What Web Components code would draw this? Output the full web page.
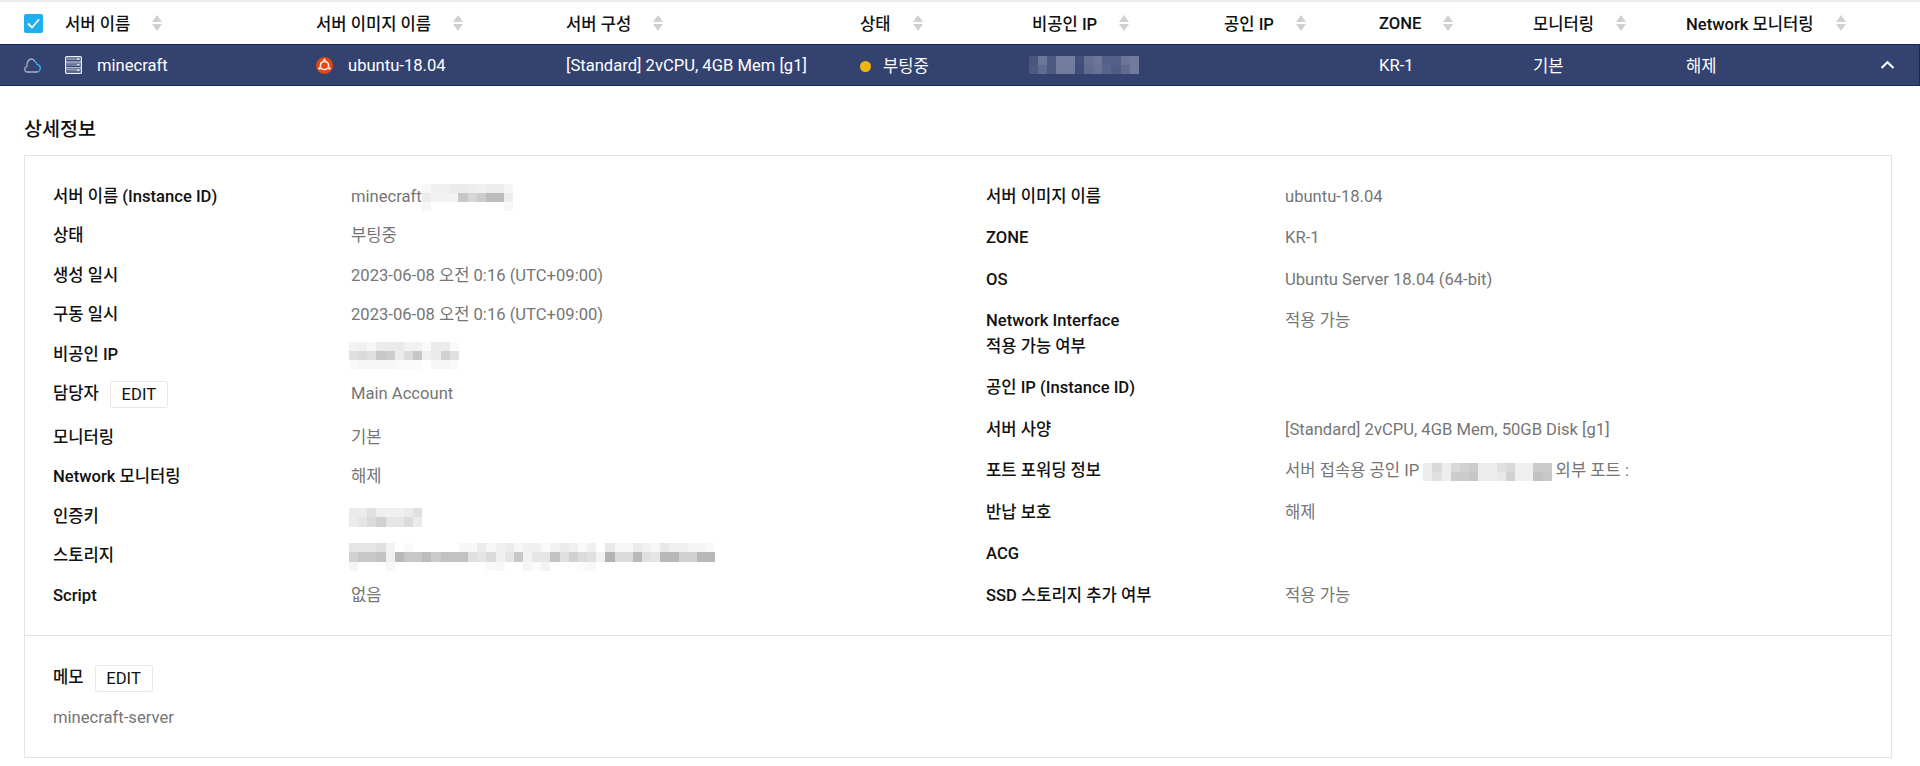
<!DOCTYPE html>
<html lang="ko">
<head>
<meta charset="utf-8">
<title>Server detail</title>
<style>
  html, body { margin: 0; padding: 0; background: #fff; }
  body { font-family: Roboto, "Noto Sans CJK KR", sans-serif; font-size: 16.6px; overflow: hidden; }
</style>
</head>
<body>
<server-table>
  <sort-head slot="head"><check-box></check-box>서버 이름</sort-head>
  <sort-head slot="head">서버 이미지 이름</sort-head>
  <sort-head slot="head">서버 구성</sort-head>
  <sort-head slot="head">상태</sort-head>
  <sort-head slot="head" style="padding-left:3px">비공인 IP</sort-head>
  <sort-head slot="head">공인 IP</sort-head>
  <sort-head slot="head">ZONE</sort-head>
  <sort-head slot="head">모니터링</sort-head>
  <sort-head slot="head">Network 모니터링</sort-head>

  <row-cell slot="row" first><server-icon></server-icon>minecraft</row-cell>
  <row-cell slot="row"><ubuntu-icon></ubuntu-icon>ubuntu-18.04</row-cell>
  <row-cell slot="row">[Standard] 2vCPU, 4GB Mem [g1]</row-cell>
  <row-cell slot="row"><status-dot></status-dot>부팅중</row-cell>
  <row-cell slot="row"><mosaic-block dark cols="12" rows="2" levels="10 28 12 32 32 8 24 28 16 16 28 30 12 22 12 30 30 6 22 26 18 14 22 30"></mosaic-block></row-cell>
  <row-cell slot="row"></row-cell>
  <row-cell slot="row">KR-1</row-cell>
  <row-cell slot="row">기본</row-cell>
  <row-cell slot="row" last>해제<chevron-up></chevron-up></row-cell>
</server-table>

<section-title>상세정보</section-title>

<detail-card>
  <detail-row slot="left" tight><span slot="label">서버 이름 (Instance ID)</span>minecraft<mosaic-block cols="10" rows="3" levels="3 6 6 8 8 7 6 7 7 4 7 5 5 5 22 16 20 26 26 7 3 0 0 0 0 0 0 0 0 3"></mosaic-block></detail-row>
  <detail-row slot="left" tight><span slot="label">상태</span>부팅중</detail-row>
  <detail-row slot="left" tight><span slot="label">생성 일시</span>2023-06-08 오전 0:16 (UTC+09:00)</detail-row>
  <detail-row slot="left" tight><span slot="label">구동 일시</span>2023-06-08 오전 0:16 (UTC+09:00)</detail-row>
  <detail-row slot="left" tight><span slot="label">비공인 IP</span><mosaic-block start cols="12" rows="3" levels="5 6 3 8 8 8 5 5 2 8 8 2 12 14 12 22 20 8 14 22 6 8 18 12 2 3 3 3 3 2 2 2 0 3 3 2"></mosaic-block></detail-row>
  <detail-row slot="left" tight edit><span slot="label">담당자<edit-button>EDIT</edit-button></span>Main Account</detail-row>
  <detail-row slot="left" tight><span slot="label">모니터링</span>기본</detail-row>
  <detail-row slot="left" tight><span slot="label">Network 모니터링</span>해제</detail-row>
  <detail-row slot="left" tight><span slot="label">인증키</span><mosaic-block start cols="8" rows="2" levels="8 8 12 6 6 6 8 12 8 10 14 18 10 10 14 8"></mosaic-block></detail-row>
  <detail-row slot="left" tight><span slot="label">스토리지</span><mosaic-block start cols="40" rows="3" levels="10 10 10 12 5 0 2 0 0 0 0 0 3 3 8 3 6 8 3 6 6 2 5 8 6 2 6 0 9 3 3 8 5 3 9 6 6 4 4 2 18 22 22 24 6 28 22 22 26 20 24 24 24 12 10 14 6 10 22 5 10 10 24 12 18 14 12 5 30 14 14 28 12 10 28 28 18 18 28 28 4 0 0 0 3 0 0 0 0 0 0 0 0 0 0 2 3 0 0 4 2 5 0 0 0 2 3 0 0 0 0 0 0 0 0 0 0 0 0 0"></mosaic-block></detail-row>
  <detail-row slot="left" tight><span slot="label">Script</span>없음</detail-row>

  <detail-row slot="right"><span slot="label">서버 이미지 이름</span>ubuntu-18.04</detail-row>
  <detail-row slot="right"><span slot="label">ZONE</span>KR-1</detail-row>
  <detail-row slot="right"><span slot="label">OS</span>Ubuntu Server 18.04 (64-bit)</detail-row>
  <detail-row slot="right"><span slot="label">Network Interface<br>적용 가능 여부</span>적용 가능</detail-row>
  <detail-row slot="right"><span slot="label">공인 IP (Instance ID)</span></detail-row>
  <detail-row slot="right"><span slot="label">서버 사양</span>[Standard] 2vCPU, 4GB Mem, 50GB Disk [g1]</detail-row>
  <detail-row slot="right"><span slot="label">포트 포워딩 정보</span>서버 접속용 공인 IP <mosaic-block cols="14" rows="2" levels="7 15 7 15 18 20 7 7 12 15 6 6 20 20 7 12 7 20 20 22 7 7 9 18 6 6 24 22"></mosaic-block> 외부 포트 :</detail-row>
  <detail-row slot="right"><span slot="label">반납 보호</span>해제</detail-row>
  <detail-row slot="right"><span slot="label">ACG</span></detail-row>
  <detail-row slot="right"><span slot="label">SSD 스토리지 추가 여부</span>적용 가능</detail-row>

  <span slot="memo-label">메모<edit-button>EDIT</edit-button></span>
  <span slot="memo">minecraft-server</span>
</detail-card>

<script>
  // header/row share one column template so the cells line up
  const columns = '316px 250px 294px 169px 195px 155px 154px 153px 234px';

  class ServerTable extends HTMLElement {
    constructor() {
      super();
      this.attachShadow({ mode: 'open' }).innerHTML = `
        <style>
          :host { display: block; border-top: 2px solid #ececec; }
          .head, .row { display: grid; grid-template-columns: ${columns}; align-items: center; }
          .head { height: 42px; background: #fff; }
          .row { height: 42px; box-sizing: border-box; background: #344270; border: solid #14285f; border-width: 1px 1px 1px 0; color: #fff; }
        </style>
        <div class="head"><slot name="head"></slot></div>
        <div class="row"><slot name="row"></slot></div>`;
    }
  }

  const sortHeadTpl = document.createElement('template');
  sortHeadTpl.innerHTML = `
    <style>
      :host { display: flex; align-items: center; font-weight: 500; color: #111; white-space: nowrap; }
      :host(:first-child) { padding-left: 24px; }
      svg { margin-left: 22px; flex: none; }
    </style>
    <slot></slot>
    <svg width="10" height="16" viewBox="0 0 10 16"><path d="M5 0 10 7H0z" fill="#d0d0d0"/><path d="M5 16 10 9H0z" fill="#d0d0d0"/></svg>`;

  class SortHead extends HTMLElement {
    constructor() {
      super();
      this.attachShadow({ mode: 'open' }).appendChild(sortHeadTpl.content.cloneNode(true));
    }
  }

  class CheckBox extends HTMLElement {
    constructor() {
      super();
      this.attachShadow({ mode: 'open' }).innerHTML = `
        <style>
          :host { display: block; width: 19px; height: 19px; margin-right: 22px; }
          svg { display: block; }
        </style>
        <svg width="19" height="19" viewBox="0 0 19 19"><rect width="19" height="19" rx="2" fill="#1eb0ee"/><path d="M4 9.5 8 13.5 15 5.5" fill="none" stroke="#fff" stroke-width="1.8"/></svg>`;
    }
  }

  class RowCell extends HTMLElement {
    constructor() {
      super();
      this.attachShadow({ mode: 'open' }).innerHTML = `
        <style>
          :host { display: flex; align-items: center; color: #fff; white-space: nowrap; }
          :host([first]) { padding-left: 24px; }
          :host([last]) { padding-right: 25px; }
        </style>
        <slot></slot>`;
    }
  }

  class ServerIcon extends HTMLElement {
    constructor() {
      super();
      this.attachShadow({ mode: 'open' }).innerHTML = `
        <style>
          :host { display: flex; align-items: center; margin-right: 15px; }
          svg { display: block; }
          .cloud { margin-right: 24px; }
        </style>
        <svg class="cloud" width="17" height="15" viewBox="0 0 17 15" fill="none" stroke-width="1.3" stroke-linecap="round">
          <path d="M4 14H3.2C1.6 14 .7 12.6 .7 11.2 .7 9.8 1.6 8.8 2.8 8.5 3 5 4.5 1 7.5 1 9.2 1 10.2 2 10.8 3.4" stroke="#a9aebf"/>
          <path d="M10.8 3.4C12 3.8 12.8 5 13 6.5 15 6.8 16.3 8.5 16.3 10.3 16.3 12.3 14.8 14 12.8 14" stroke="#3fb1ec"/>
          <path d="M4 14H12.8" stroke="#a9aebf"/>
        </svg>
        <svg width="17" height="18" viewBox="0 0 17 18">
          <rect x=".6" y=".6" width="15.8" height="16.8" rx="1" fill="#344270" stroke="#eef2f8" stroke-width="1.2"/>
          <path d="M1.5 2.2H15.5M1.5 3.6H15.5M1.5 7.8H15.5M1.5 9.2H15.5M1.5 13.5H15.5M1.5 14.9H15.5" stroke="#9fadc8" stroke-width=".9"/>
          <path d="M1 6H16M1 11.8H16" stroke="#eef2f8" stroke-width="1"/>
          <path d="M12 3H14.5M12 8.7H14.5M12 14.2H14.5" stroke="#fff" stroke-width="1.1"/>
        </svg>`;
    }
  }

  class UbuntuIcon extends HTMLElement {
    constructor() {
      super();
      this.attachShadow({ mode: 'open' }).innerHTML = `
        <style>
          :host { display: block; width: 17px; height: 17px; margin-right: 15px; }
          svg { display: block; }
        </style>
        <svg width="17" height="17" viewBox="0 0 17 17">
          <circle cx="8.5" cy="8.5" r="8.5" fill="#e2470f"/>
          <circle cx="8.5" cy="8.5" r="4.1" fill="none" stroke="#fff" stroke-width="1.5"/>
          <g fill="#fff" stroke="#e2470f" stroke-width=".4"><circle cx="8.5" cy="3" r="1.5"/><circle cx="3.7" cy="11.3" r="1.5"/><circle cx="13.3" cy="11.3" r="1.5"/></g>
        </svg>`;
    }
  }

  class StatusDot extends HTMLElement {
    constructor() {
      super();
      this.attachShadow({ mode: 'open' }).innerHTML = `
        <style>
          :host { display: block; width: 11px; height: 11px; margin: 2px 12px 0 0; border-radius: 50%; background: #eeb70f; }
        </style>`;
    }
  }

  class ChevronUp extends HTMLElement {
    constructor() {
      super();
      this.attachShadow({ mode: 'open' }).innerHTML = `
        <style>
          :host { display: block; margin-left: auto; line-height: 0; }
        </style>
        <svg width="15" height="10" viewBox="0 0 15 10"><path d="M1.5 8 7.5 2.2 13.5 8" fill="none" stroke="#fff" stroke-width="2"/></svg>`;
    }
  }

  // pixelated stand-in for the masked values: levels are percent black per cell
  class MosaicBlock extends HTMLElement {
    constructor() {
      super();
      const cols = +this.getAttribute('cols');
      const rows = +this.getAttribute('rows');
      const levels = this.getAttribute('levels').trim().split(/\s+/).map(Number);
      const dark = this.hasAttribute('dark');
      const size = 9.17;
      let cells = '';
      for (let i = 0; i < cols * rows; i++) {
        const lv = levels[i] || 0;
        cells += `<i style="background:${dark ? `rgba(255,255,255,${lv / 100})` : `rgba(0,0,0,${lv / 100})`}"></i>`;
      }
      // negative block margins keep the block from pushing its row taller
      this.attachShadow({ mode: 'open' }).innerHTML = `
        <style>
          :host { display: inline-grid; vertical-align: middle; margin-block: ${-rows * size / 2}px; grid-template-columns: repeat(${cols}, ${size}px); grid-auto-rows: ${size}px; }
          :host([start]) { margin-left: -2px; }
          i { display: block; }
        </style>${cells}`;
    }
  }

  class SectionTitle extends HTMLElement {
    constructor() {
      super();
      this.attachShadow({ mode: 'open' }).innerHTML = `
        <style>
          :host { display: block; padding: 32px 24px 13px; font-size: 19.6px; line-height: 24px; font-weight: 500; color: #111; }
        </style>
        <slot></slot>`;
    }
  }

  class DetailCard extends HTMLElement {
    constructor() {
      super();
      this.attachShadow({ mode: 'open' }).innerHTML = `
        <style>
          :host { display: block; margin: 0 28px 0 24px; border: 1px solid #e4e4e4; box-sizing: border-box; height: 603px; }
          .grid { display: grid; grid-template-columns: 933px 1fr; height: 480px; box-sizing: border-box; padding: 20px 28px 0; border-bottom: 1px solid #e4e4e4; }
          .left { padding-top: 1px; }
          .memo { padding: 28px 28px 0; }
          .memo-label { font-weight: 500; color: #111; line-height: 28px; }
          .memo-text { margin-top: 14px; line-height: 24px; color: #757575; }
        </style>
        <div class="grid">
          <div class="left"><slot name="left"></slot></div>
          <div><slot name="right"></slot></div>
        </div>
        <div class="memo">
          <div class="memo-label"><slot name="memo-label"></slot></div>
          <div class="memo-text"><slot name="memo"></slot></div>
        </div>`;
    }
  }

  const detailRowTpl = document.createElement('template');
  detailRowTpl.innerHTML = `
    <style>
      :host { display: grid; grid-template-columns: 299px 1fr; padding: 7.72px 0; line-height: 26px; }
      :host([tight]) { grid-template-columns: 298px 1fr; padding: 6.75px 0; }
      :host([edit]) { padding-bottom: 10.75px; }
      .label { font-weight: 500; color: #111; white-space: nowrap; }
      .value { color: #757575; white-space: nowrap; }
    </style>
    <div class="label"><slot name="label"></slot></div>
    <div class="value"><slot></slot></div>`;

  class DetailRow extends HTMLElement {
    constructor() {
      super();
      this.attachShadow({ mode: 'open' }).appendChild(detailRowTpl.content.cloneNode(true));
    }
  }

  class EditButton extends HTMLElement {
    constructor() {
      super();
      this.attachShadow({ mode: 'open' }).innerHTML = `
        <style>
          :host { display: inline-block; box-sizing: border-box; width: 58px; height: 27px; margin: -1px 0 -1px 11px; border: 1px solid #e8e8e8; border-radius: 2px; background: #fff; color: #111; font-weight: 400; line-height: 25px; text-align: center; vertical-align: middle; }
        </style>
        <slot></slot>`;
    }
  }

  customElements.define('server-table', ServerTable);
  customElements.define('sort-head', SortHead);
  customElements.define('check-box', CheckBox);
  customElements.define('row-cell', RowCell);
  customElements.define('server-icon', ServerIcon);
  customElements.define('ubuntu-icon', UbuntuIcon);
  customElements.define('status-dot', StatusDot);
  customElements.define('chevron-up', ChevronUp);
  customElements.define('mosaic-block', MosaicBlock);
  customElements.define('section-title', SectionTitle);
  customElements.define('detail-card', DetailCard);
  customElements.define('detail-row', DetailRow);
  customElements.define('edit-button', EditButton);
</script>
</body>
</html>
